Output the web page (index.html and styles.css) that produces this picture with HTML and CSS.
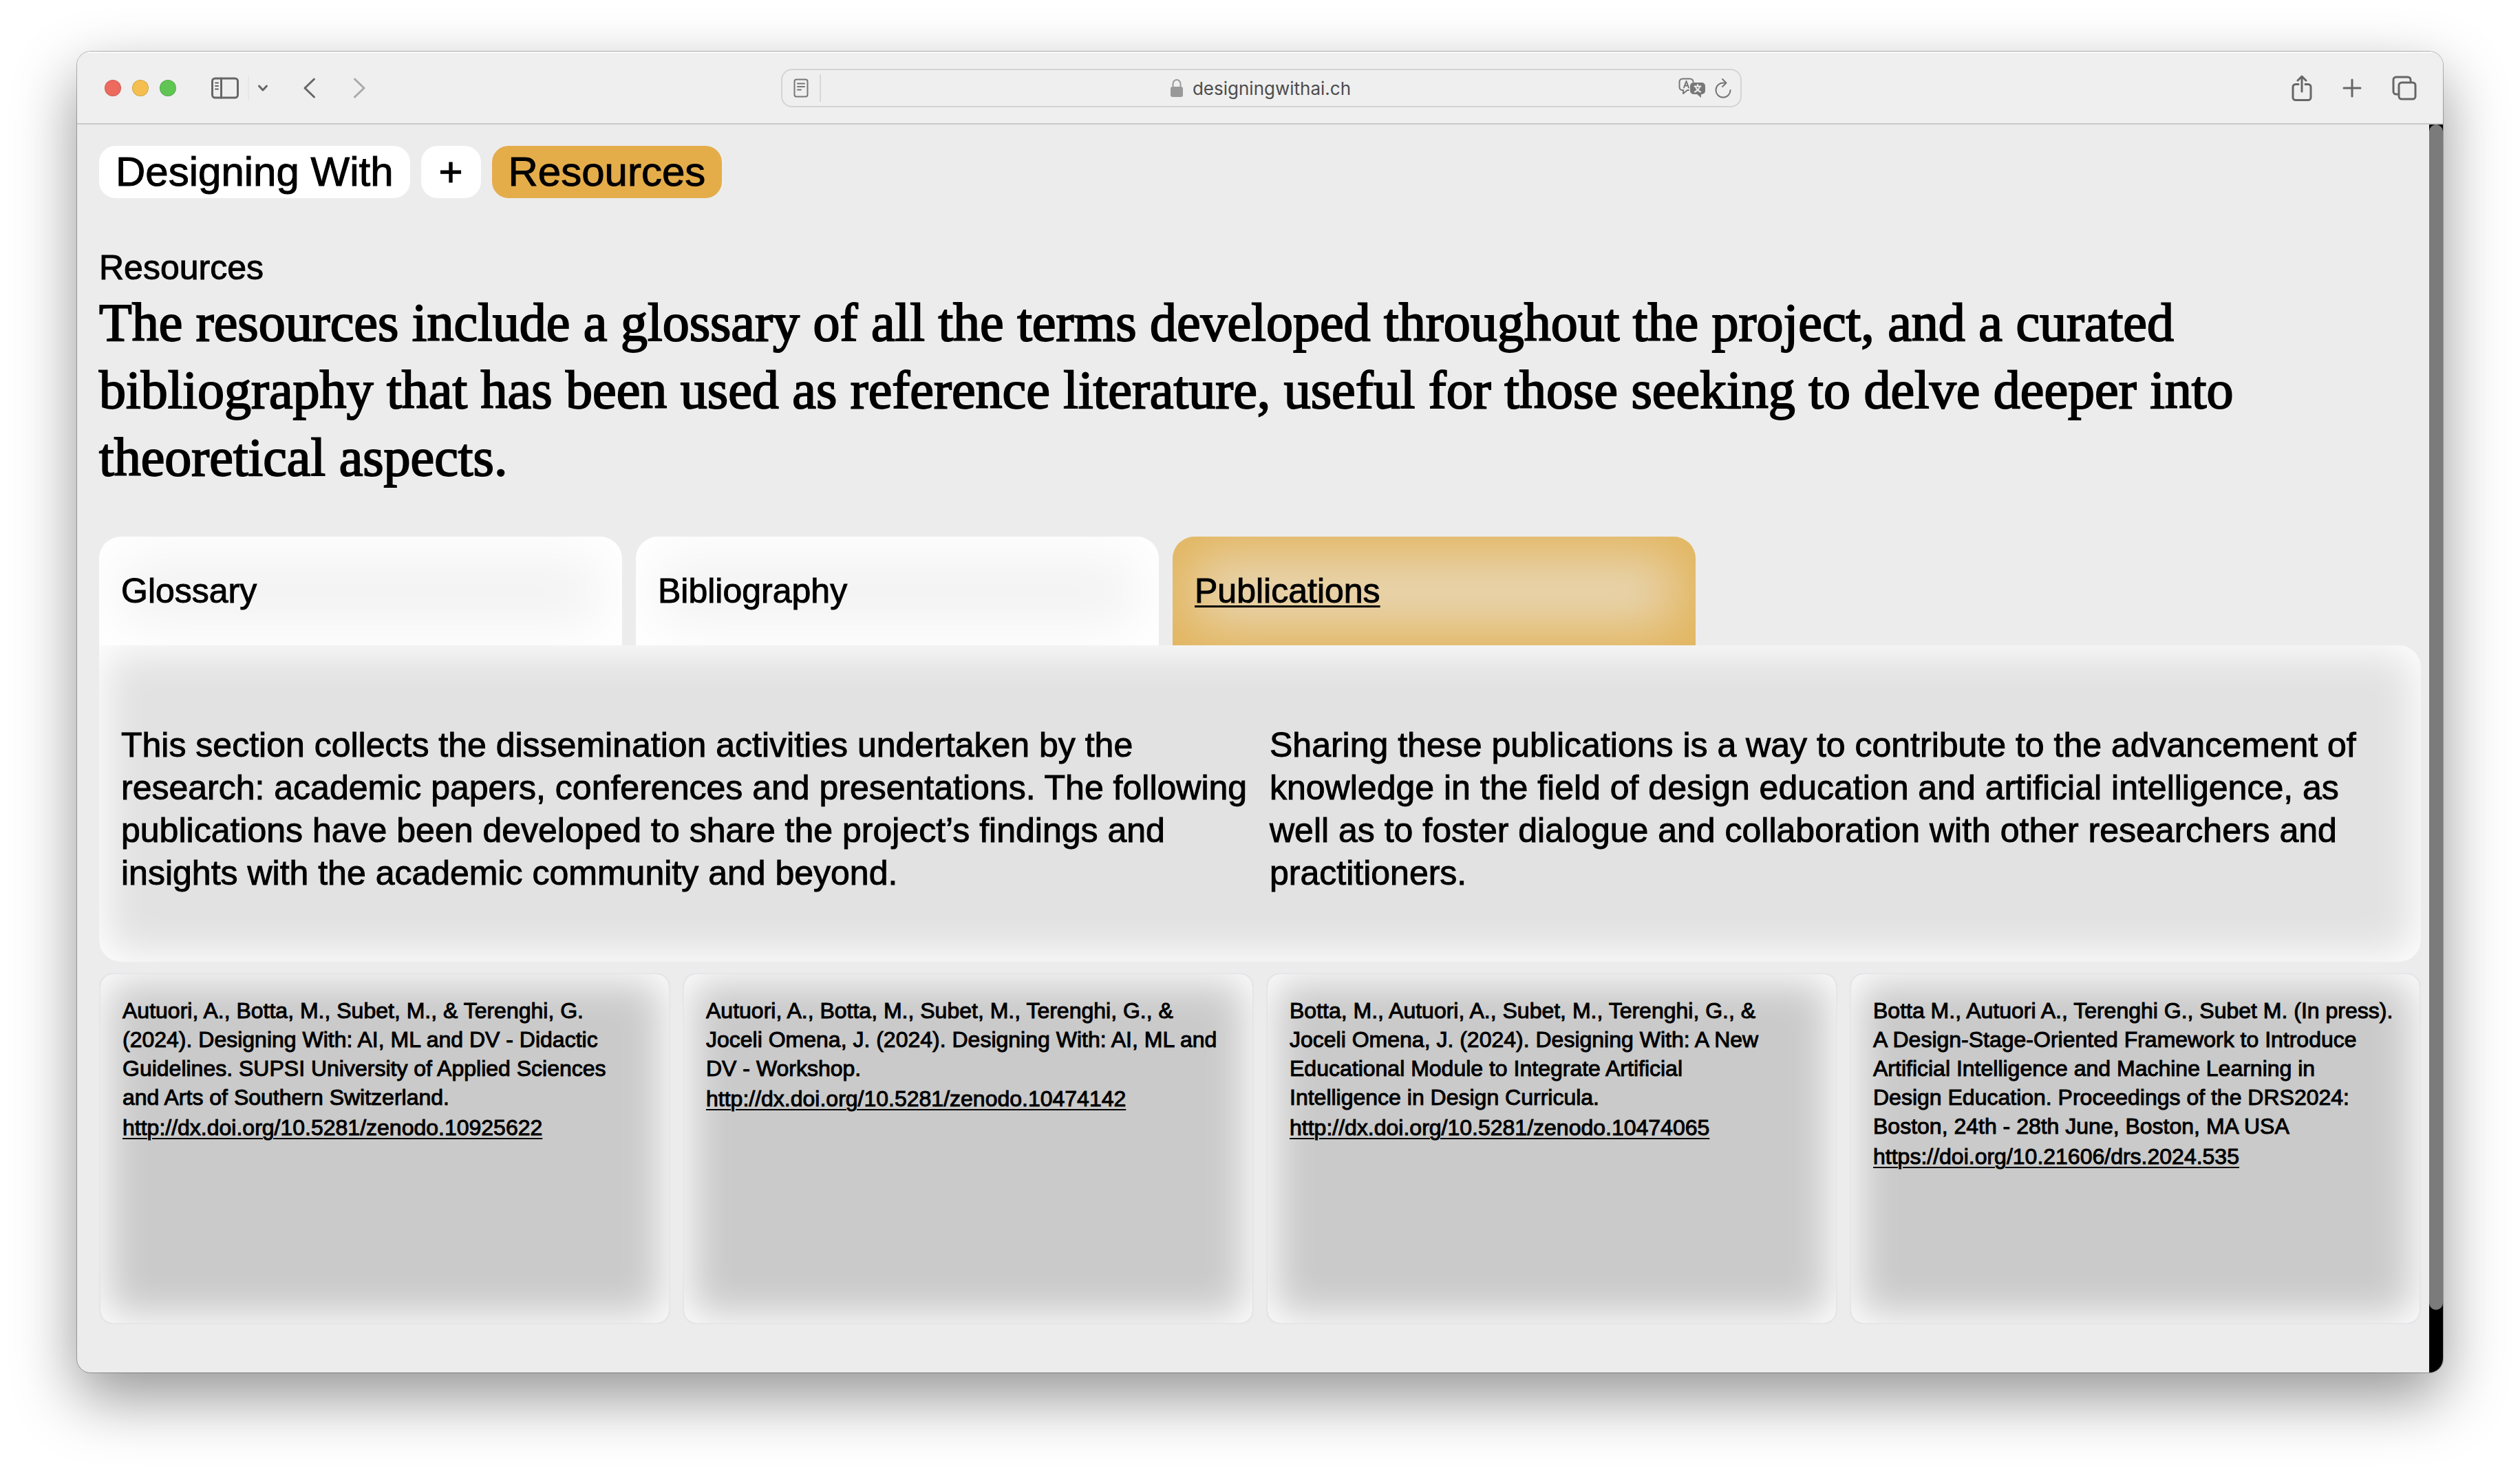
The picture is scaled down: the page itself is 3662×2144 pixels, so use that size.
FILE: index.html
```html
<!DOCTYPE html>
<html lang="en">
<head>
<meta charset="utf-8">
<title>Designing With – Resources</title>
<link rel="stylesheet" href="styles.css">
</head>
<body>
<div class="window">
  <header class="toolbar">
    <div class="toolbar-side">
      <div class="lights"><button class="light red" aria-label="Close"></button><button class="light yellow" aria-label="Minimise"></button><button class="light green" aria-label="Zoom"></button></div>
      <div class="sidebar-tools">
        <button class="tool" aria-label="Sidebar"><svg width="40" height="34" viewBox="0 0 40 34"><rect x="1.5" y="3" width="37" height="28" rx="4"/><path d="M14.500 3v28"/><path class="fine" d="M6 9.500h4M6 14h4M6 18.500h4"/></svg></button>
        <button class="tool menu-arrow" aria-label="Sidebar menu"><svg width="16" height="12" viewBox="0 0 16 12"><path d="M2.500 3l5.500 6 5.500-6"/></svg></button>
      </div>
      <div class="history">
        <button class="tool" aria-label="Back"><svg width="20" height="32" viewBox="0 0 20 32"><path d="M16.500 3L3 16l13.500 13"/></svg></button>
        <button class="tool dim" aria-label="Forward"><svg width="20" height="32" viewBox="0 0 20 32"><path d="M3.500 3L17 16 3.500 29"/></svg></button>
      </div>
    </div>
    <div class="address">
      <button class="tool reader" aria-label="Reader"><svg width="22" height="28" viewBox="0 0 22 28"><rect x="1.500" y="1.500" width="19" height="25" rx="3"/><path d="M6 7.500h10M6 12h10M6 16.500h5"/></svg></button>
      <div class="site"><svg width="18" height="26" viewBox="0 0 18 26"><path class="shackle" d="M3.500 12V7a5.500 6 0 0 1 11 0v5"/><rect class="lock" y="11" width="18" height="15" rx="3"/></svg><span>designingwithai.ch</span></div>
      <div class="address-tools">
        <button class="tool" aria-label="Translate"><svg width="40" height="30" viewBox="0 0 40 30"><path d="M15 18h-2l-6 5v-5H6a4.500 4.500 0 0 1-4.500-4.500V6A4.500 4.500 0 0 1 6 1.500h11A4.500 4.500 0 0 1 21.500 6"/><path d="M8 14.500L11.500 5 15 14.500M9 11.500h5"/><path class="bubble" d="M22 7h12a5 5 0 0 1 5 5v7a5 5 0 0 1-5 5h-1v5l-6-5h-5a5 5 0 0 1-5-5v-7a5 5 0 0 1 5-5z"/><path class="glyph" d="M23.500 12.500h9M28 10v2.500M25 13q1.500 5 7 7.500M31 13q-1.500 5-7 7.500"/></svg></button>
        <button class="tool" aria-label="Reload"><svg width="26" height="30" viewBox="0 0 26 30"><path d="M17 7.500H13A10.500 10.500 0 1 0 23.500 18M12 2l5.500 5.500-5.500 5.500"/></svg></button>
      </div>
    </div>
    <div class="toolbar-side actions">
      <button class="tool" aria-label="Share"><svg width="30" height="38" viewBox="0 0 30 38"><path d="M10 13.500H6A4 4 0 0 0 2 17.500V32.500a4 4 0 0 0 4 4H24a4 4 0 0 0 4-4V17.500a4 4 0 0 0-4-4H20M15 24V2M9 8l6-6 6 6"/></svg></button>
      <button class="tool" aria-label="New tab"><svg width="28" height="28" viewBox="0 0 28 28"><path d="M14 2v24M2 14h24"/></svg></button>
      <button class="tool" aria-label="Tab overview"><svg width="36" height="36" viewBox="0 0 36 36"><path d="M8 27H6a4 4 0 0 1-4-4V6A4 4 0 0 1 6 2H23A4 4 0 0 1 27 6V8"/><rect x="10" y="10" width="24" height="24" rx="4"/></svg></button>
    </div>
  </header>
  <div class="viewport">
    <main class="page">
      <nav class="crumbs"><a class="pill" href="#home">Designing With</a><button class="pill plus">+</button><a class="pill current" href="#resources">Resources</a></nav>
      <h1 class="label">Resources</h1>
      <p class="intro">The resources include a glossary of all the terms developed throughout the project, and a curated<br>bibliography that has been used as reference literature, useful for those seeking to delve deeper into<br>theoretical aspects.</p>
      <nav class="tabs"><a class="tab" href="#glossary">Glossary</a><a class="tab" href="#bibliography">Bibliography</a><a class="tab active" href="#publications">Publications</a></nav>
      <section class="panel">
        <p>This section collects the dissemination activities undertaken by the<br>research: academic papers, conferences and presentations. The following<br>publications have been developed to share the project’s findings and<br>insights with the academic community and beyond.</p>
        <p>Sharing these publications is a way to contribute to the advancement of<br>knowledge in the field of design education and artificial intelligence, as<br>well as to foster dialogue and collaboration with other researchers and<br>practitioners.</p>
      </section>
      <section class="cards">
        <article class="card"><p>Autuori, A., Botta, M., Subet, M., &amp; Terenghi, G.<br>(2024). Designing With: AI, ML and DV - Didactic<br>Guidelines. SUPSI University of Applied Sciences<br>and Arts of Southern Switzerland.</p><a href="http://dx.doi.org/10.5281/zenodo.10925622">http://dx.doi.org/10.5281/zenodo.10925622</a></article>
        <article class="card"><p>Autuori, A., Botta, M., Subet, M., Terenghi, G., &amp;<br>Joceli Omena, J. (2024). Designing With: AI, ML and<br>DV - Workshop.</p><a href="http://dx.doi.org/10.5281/zenodo.10474142">http://dx.doi.org/10.5281/zenodo.10474142</a></article>
        <article class="card"><p>Botta, M., Autuori, A., Subet, M., Terenghi, G., &amp;<br>Joceli Omena, J. (2024). Designing With: A New<br>Educational Module to Integrate Artificial<br>Intelligence in Design Curricula.</p><a href="http://dx.doi.org/10.5281/zenodo.10474065">http://dx.doi.org/10.5281/zenodo.10474065</a></article>
        <article class="card"><p>Botta M., Autuori A., Terenghi G., Subet M. (In press).<br>A Design-Stage-Oriented Framework to Introduce<br>Artificial Intelligence and Machine Learning in<br>Design Education. Proceedings of the DRS2024:<br>Boston, 24th - 28th June, Boston, MA USA</p><a href="https://doi.org/10.21606/drs.2024.535">https://doi.org/10.21606/drs.2024.535</a></article>
      </section>
    </main>
    <div class="scrollbar"><div class="thumb"></div></div>
  </div>
</div>
</body>
</html>
```
FILE: styles.css
```css
* { box-sizing: border-box; }
body { margin: 0; padding: 75px 112px 149px; background: #fff; color: #000; font-family: "Liberation Sans", Arial, sans-serif; }
p, h1 { margin: 0; font-weight: 400; }
a { color: inherit; }
button { font: inherit; color: inherit; border: 0; padding: 0; background: none; }
svg { display: block; fill: none; stroke: #666; stroke-width: 3; stroke-linecap: round; stroke-linejoin: round; }

.window { border-radius: 20px; overflow: hidden; background: #ececec; box-shadow: 0 0 0 1px #0004, 0 36px 90px rgba(0, 0, 0, .42); }

.toolbar { display: grid; grid-template-columns: 1fr 1396px 1fr; align-items: center; height: 106px; padding: 2px 36px 0 40px; background: #efefef; border-bottom: 2px solid #c9c9c9; box-shadow: inset 0 2px #fafafa; }
.toolbar-side, .lights, .sidebar-tools, .history, .address, .site, .address-tools, .actions { display: flex; align-items: center; }
.tool { display: flex; align-items: center; justify-content: center; }
.lights { gap: 16px; }
.light { width: 24px; height: 24px; border: 1px solid #0002; border-radius: 50%; }
.red { background: #ed6a5e; }
.yellow { background: #f5bf4f; }
.green { background: #61c554; }
.sidebar-tools { margin-left: 51px; }
.fine { stroke-width: 2; }
.menu-arrow { height: 36px; margin-left: 13px; padding-left: 12px; border-left: 2px solid #e6e6e6; }
.history { gap: 52px; margin-left: 50px; }
.dim { opacity: .5; }
.address { height: 56px; border: 2px solid #d4d4d4; border-radius: 16px; padding: 0 12px 0 16px; font-family: Inter, "Liberation Sans", sans-serif; font-size: 26px; color: #4c4c4c; }
.address svg { stroke: #777; stroke-width: 2; }
.reader { height: 40px; padding-right: 16px; border-right: 2px solid #d8d8d8; }
.site { flex: 1; justify-content: center; gap: 14px; padding-left: 32px; }
.address .shackle { stroke: #999; }
.site .lock { fill: #999; stroke: none; }
.address-tools { gap: 12px; }
.address svg .bubble { fill: #777; stroke: none; }
.address svg .glyph { stroke: #efefef; }
.actions { justify-content: flex-end; gap: 44px; padding-right: 2px; }

.viewport { display: flex; }
.page { flex: 1; padding: 31px 12px 70px 32px; -webkit-text-stroke: 1px #000; }
.scrollbar { width: 20px; background: #000; }
.thumb { height: 95%; border-radius: 10px; background: #7b7b7b; }

.crumbs { display: flex; gap: 16px; }
.pill { height: 76px; padding: 0 24px; border-radius: 24px; background: #fff; font-size: 60px; line-height: 76px; text-decoration: none; }
.plus { width: 87px; }
.current { background: #e4ad4a; }
.label { margin-top: 70px; font-size: 50px; line-height: 62px; }
.intro { font-family: "Liberation Serif", "Times New Roman", serif; font-size: 78px; line-height: 98px; white-space: nowrap; -webkit-text-stroke: 2px #000; }

.tabs { display: grid; grid-template-columns: repeat(3, 760px); gap: 20px; margin-top: 66px; }
.tab { height: 158px; padding: 0 32px; border-radius: 32px 32px 0 0; background: #f2f2f2; box-shadow: inset 0 0 80px 30px #fff; font-size: 50px; line-height: 158px; text-decoration: none; }
.active { background: #e9d8b8; box-shadow: inset 0 0 80px 30px #e2b55e; text-decoration: underline; text-decoration-thickness: 3px; text-underline-offset: 4px; }
.panel { display: grid; grid-template-columns: 1fr 1fr; gap: 28px; padding: 114px 32px 98px; border-radius: 0 32px 32px 32px; background: #e2e2e2; box-shadow: inset 0 0 60px 10px #fff; font-size: 50px; line-height: 62px; white-space: nowrap; }
.cards { display: grid; grid-template-columns: repeat(4, 1fr); gap: 18px; margin-top: 16px; }
.card { min-height: 511px; padding: 32px; border: 2px solid #e5e5ea; border-radius: 20px; background: #cacaca; box-shadow: inset 0 0 60px 10px #fff; font-size: 32px; line-height: 42px; white-space: nowrap; }
.card a { display: block; padding-top: 2px; text-decoration-thickness: 2px; text-underline-offset: 4px; }
```
